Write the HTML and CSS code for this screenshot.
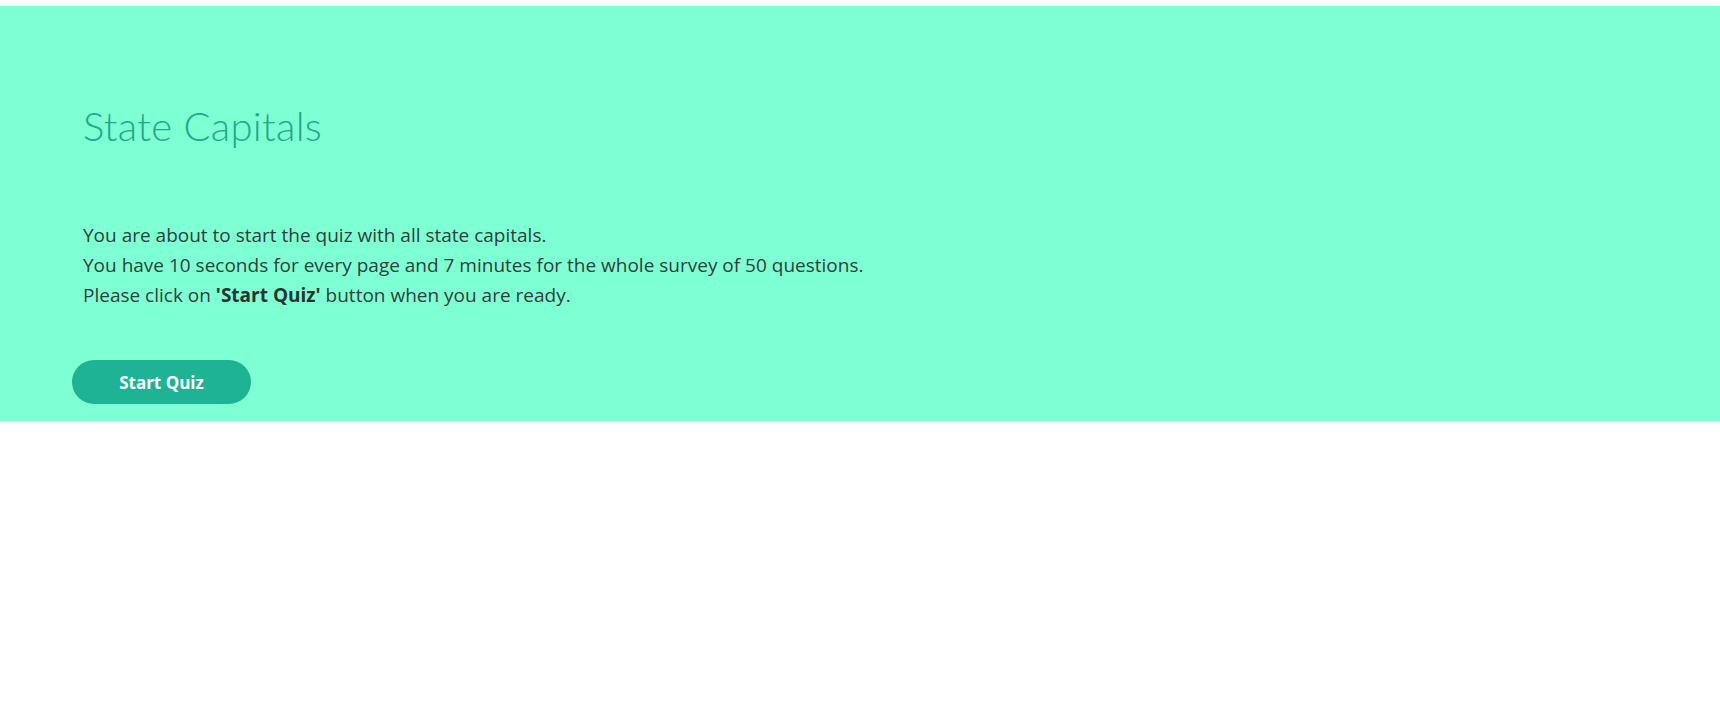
FILE: index.html
```html
<!DOCTYPE html>
<html>
<head>
<meta charset="utf-8">
<link rel="stylesheet" href="styles.css">
</head>
<body>
<section class="intro">
  <h1 class="title">State Capitals</h1>
  <div class="info">
    <p>You are about to start the quiz with all state capitals.</p>
    <p>You have 10 seconds for every page and 7 minutes for the whole survey of 50 questions.</p>
    <p>Please click on <b>'Start Quiz'</b> button when you are ready.</p>
  </div>
  <button class="start">Start Quiz</button>
</section>
</body>
</html>
```
FILE: styles.css
```css
html, body {
  margin: 0;
  padding: 0;
  background: #ffffff;
}
.intro {
  margin-top: 6px;
  background: #7fffd4;
  padding: 97px 72px 17px 72px;
  height: 415px;
  box-sizing: border-box;
  display: flex;
  flex-direction: column;
  align-items: flex-start;
}
.title {
  margin: 0 0 0 11px;
  font-family: "Lato", sans-serif;
  font-weight: 300;
  font-size: 40px;
  letter-spacing: 0.3px;
  line-height: 46px;
  color: #20a98a;
}
.info {
  margin: 71px 0 0 11px;
  font-family: "Open Sans", sans-serif;
  font-size: 19px;
  line-height: 30px;
  color: #2f3f3a;
}
.info p { margin: 0; }
.info b { font-weight: 700; color: #263530; }
.start {
  margin-top: 50px;
  width: 179px;
  height: 44px;
  border: none;
  border-radius: 22px;
  background: #1db394;
  color: #ffffff;
  font-family: "Open Sans", sans-serif;
  font-weight: 700;
  font-size: 17px;
  cursor: pointer;
}
```
